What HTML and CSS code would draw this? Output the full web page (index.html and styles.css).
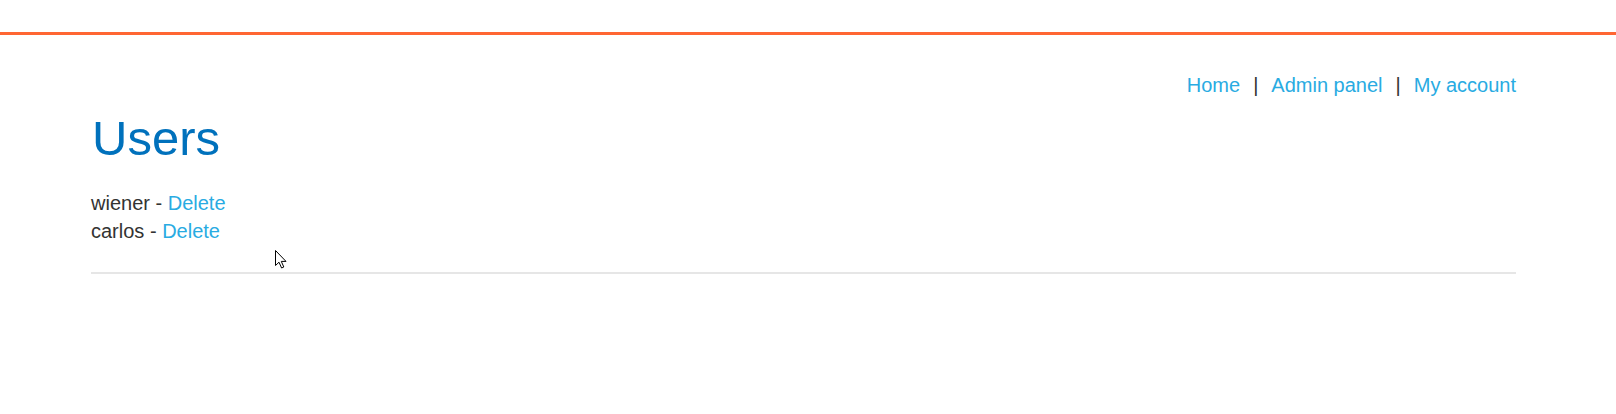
FILE: index.html
```html
<!DOCTYPE html>
<html>
<head>
<meta charset="utf-8">
<title>Users</title>
<link rel="stylesheet" href="styles.css">
</head>
<body>
<div class="topbar"></div>
<div class="container">
  <nav class="nav">
    <a href="#">Home</a><span class="sep">|</span><a href="#">Admin panel</a><span class="sep">|</span><a href="#">My account</a>
  </nav>
  <h1 class="title">Users</h1>
  <div class="users">
    <div class="user">wiener - <a href="#">Delete</a></div>
    <div class="user">carlos - <a href="#">Delete</a></div>
  </div>
  <hr class="rule">
</div>
<svg class="cursor" width="12" height="19" viewBox="0 0 12 19"><path d="M0.5 0.5 L0.5 15.5 L4 12.2 L6.6 18 L8.8 17 L6.3 11.4 L11 11.4 Z" fill="#fff" stroke="#000" stroke-width="1"/></svg>
</body>
</html>
```
FILE: styles.css
```css
html, body {
  margin: 0;
  padding: 0;
  background: #fff;
}
body {
  font-family: "Liberation Sans", Arial, sans-serif;
  font-size: 20px;
  line-height: 28px;
  color: #333332;
  position: relative;
  min-height: 414px;
}
a {
  color: #29abe2;
  text-decoration: none;
}
.topbar {
  margin-top: 32px;
  height: 3px;
  background: #ff6633;
}
.container {
  padding: 0 100px 0 91px;
}
.nav {
  display: flex;
  justify-content: flex-end;
  margin-top: 38px;
  line-height: 24px;
}
.sep {
  padding: 0 13px;
  color: #333332;
}
.title {
  margin: 11px 0 0 1px;
  font-size: 49px;
  line-height: 60px;
  font-weight: normal;
  color: #0071bc;
}
.users {
  margin-top: 21px;
}
.rule {
  margin: 27px 0 0;
  border: 0;
  height: 2px;
  background: #e6e6e6;
}
.cursor {
  position: absolute;
  left: 275px;
  top: 250px;
}
```
